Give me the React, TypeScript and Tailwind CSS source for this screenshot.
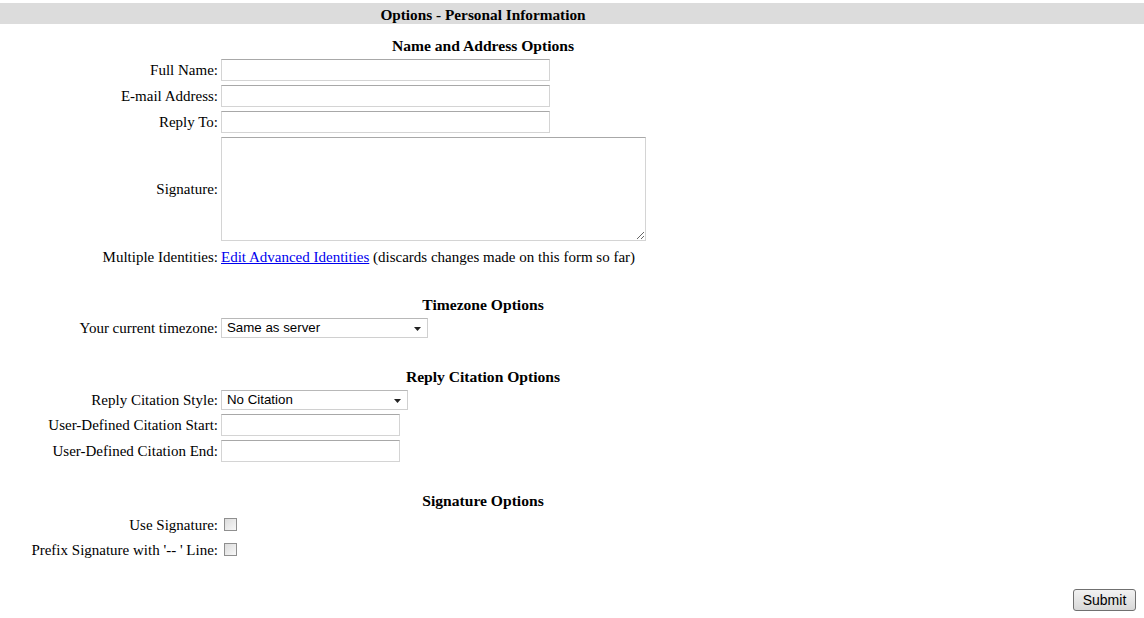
import React from "react";

const serif = { fontFamily: '"Liberation Serif", "Times New Roman", serif' };

function TextInput({ w }: { w: string }) {
  return (
    <div
      className={`${w} h-[22px] my-[2px] border border-[#d4d4d4] border-t-[#a8a8a8] bg-white`}
    />
  );
}

function FakeSelect({ w, value }: { w: string; value: string }) {
  return (
    <div
      className={`${w} h-[20px] my-[2px] border border-[#d0d0d0] border-t-[#b8b8b8] bg-white flex items-center pl-[5px] pr-[6px] text-[13.3px] text-black`}
      style={{ fontFamily: '"Liberation Sans", Arial, sans-serif' }}
    >
      <span className="flex-1 leading-none">{value}</span>
      <svg width="7" height="4" viewBox="0 0 7 4" className="mt-[1px]">
        <path d="M0 0 H7 L3.5 4 Z" fill="#222" />
      </svg>
    </div>
  );
}

function Checkbox() {
  return (
    <div className="ml-[3px] w-[13px] h-[13px] border border-[#8f8f8f] bg-gradient-to-br from-[#dcdcdc] to-[#f8f8f8]" />
  );
}

function Row({ label, children, h }: { label: string; children: React.ReactNode; h?: string }) {
  return (
    <div className={`flex items-center ${h ?? ""}`}>
      <div className="w-[218px] text-right shrink-0 pr-0 whitespace-nowrap">{label}</div>
      <div className="pl-[3px] flex items-center">{children}</div>
    </div>
  );
}

function Heading({ children, mt }: { children: React.ReactNode; mt: string }) {
  return (
    <div className={`w-[966px] text-center font-bold text-[15.6px] h-[18px] leading-[18px] ${mt}`}>{children}</div>
  );
}

export default function App() {
  return (
    <div className="w-[1144px] h-[618px] bg-white text-black text-[15px] leading-[18px] overflow-hidden" style={serif}>
      <div className="pt-[3px]">
        <div className="w-full h-[21px] bg-[#dcdcdc]">
          <div className="w-[966px] text-center font-bold text-[15.3px] leading-[24px]">Options - Personal Information</div>
        </div>
      </div>

      <Heading mt="mt-[13px]">Name and Address Options</Heading>
      <div className="mt-[2px]">
        <Row label="Full Name:"><TextInput w="w-[329px]" /></Row>
        <Row label="E-mail Address:"><TextInput w="w-[329px]" /></Row>
        <Row label="Reply To:"><TextInput w="w-[329px]" /></Row>
        <Row label="Signature:">
          <textarea className="w-[425px] h-[104px] my-[2px] border border-[#d4d4d4] border-t-[#a8a8a8] bg-white resize block outline-none" />
        </Row>
        <div className="flex py-[5px]">
          <div className="w-[218px] text-right shrink-0 whitespace-nowrap">Multiple Identities:</div>
          <div className="pl-[3px] whitespace-nowrap">
            <a href="#" className="text-[#0000ee] underline">Edit Advanced Identities</a> (discards changes made on this form so far)
          </div>
        </div>
      </div>

      <Heading mt="mt-[25px]">Timezone Options</Heading>
      <div className="mt-[2px]">
        <Row label="Your current timezone:"><FakeSelect w="w-[207px]" value="Same as server" /></Row>
      </div>

      <Heading mt="mt-[28px]">Reply Citation Options</Heading>
      <div className="mt-[2px]">
        <Row label="Reply Citation Style:"><FakeSelect w="w-[187px]" value="No Citation" /></Row>
        <Row label="User-Defined Citation Start:"><TextInput w="w-[179px]" /></Row>
        <Row label="User-Defined Citation End:"><TextInput w="w-[179px]" /></Row>
      </div>

      <Heading mt="mt-[28px]">Signature Options</Heading>
      <div className="mt-[2px]">
        <Row label="Use Signature:" h="h-[25px]"><Checkbox /></Row>
        <Row label="Prefix Signature with '-- ' Line:" h="h-[25px]"><Checkbox /></Row>
      </div>

      <div className="flex justify-end pr-[8px] mt-[27px]">
        <button
          className="w-[63px] h-[22px] rounded-[3px] border border-[#707070] bg-gradient-to-b from-[#f2f2f2] to-[#d8d8d8] text-[14px] leading-none text-black"
          style={{ fontFamily: '"Liberation Sans", Arial, sans-serif' }}
        >
          Submit
        </button>
      </div>
    </div>
  );
}
